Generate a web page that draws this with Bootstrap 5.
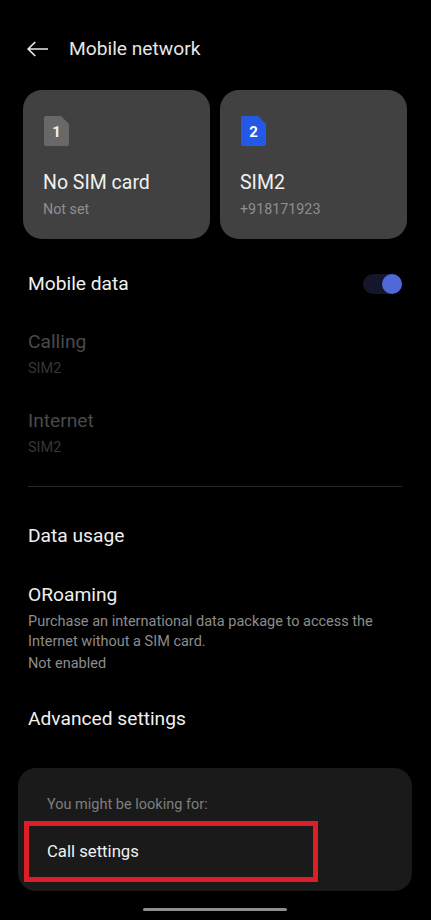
<!DOCTYPE html>
<html lang="en">
<head>
<meta charset="utf-8">
<title>Mobile network</title>
<link rel="stylesheet" href="https://cdn.jsdelivr.net/npm/bootstrap@5.3.0/dist/css/bootstrap.min.css">
<style>
html,body{height:100%;background:#000;}
body{font-family:Roboto,"Noto Sans",sans-serif;color:#f2f2f2;overflow:hidden;}
.screen{width:431px;height:920px;padding-top:37px;}
.topbar{height:24px;padding-left:27px;gap:21px;}
.topbar svg{display:block;}
.title-txt{font-size:19.2px;line-height:24px;color:#e6e6e6;}
.sim-row{padding:0 24px 0 23px;margin-top:29px;gap:10px;}
.sim-tile{flex:1 1 0;height:149px;background:#414141;border-radius:19px;padding:26px 0 0 20px;}
.sim-tile svg{display:block;margin-left:1px;}
.sim-name{font-size:19.5px;line-height:24px;margin-top:25px;color:#f0f0f0;}
.sim-sub{font-size:14.3px;line-height:18px;margin-top:5px;color:#8f8f8f;}
.item{padding-left:28px;padding-right:29px;}
.item-title{font-size:19.2px;line-height:24px;color:#f0f0f0;}
.item-sub{font-size:14.5px;line-height:20px;color:#8c8c8c;}
.muted-title{color:#4a4a4a;}
.muted-sub{color:#363636;font-size:14.5px;line-height:18px;margin-top:6px;}
.toggle-track{width:39px;height:20px;border-radius:10px;background:#15162a;}
.toggle-knob{width:20px;height:20px;border-radius:50%;background:#5069d8;}
.rule{height:1px;background:#262626;margin:29px 29px 0 28px;}
.panel{margin:37px 19px 0 18px;height:123px;background:#1a1a1a;border-radius:18px;padding-top:28px;}
.panel-head{font-size:14.5px;line-height:18px;color:#7f7f7f;padding-left:29px;}
.hilite{width:294px;height:61px;margin:7px 0 0 6px;border:5px solid #dc1f26;padding-left:18px;font-size:16.7px;color:#f0f0f0;}
.home-bar{width:144px;height:3px;border-radius:2px;background:#8e8e8e;margin:17px 0 0 143px;}
.step-data{margin-top:33px;}
.step-calling{margin-top:34px;}
.step-internet{margin-top:31px;}
.step-usage{margin-top:37px;}
.step-roam{margin-top:35px;}
.step-desc{margin-top:5px;}
.step-status{margin-top:2px;}
.step-adv{margin-top:33px;}
</style>
</head>
<body>
<div class="screen">
  <div class="topbar d-flex align-items-center">
    <svg width="21" height="16" viewBox="0 0 21 16" fill="none" stroke="#e8e8e8" stroke-width="1.7"><path d="M21 8H1.5M8.2 1 1.2 8l7 7"/></svg>
    <div class="title-txt">Mobile network</div>
  </div>

  <div class="sim-row d-flex">
    <div class="sim-tile">
      <svg width="25" height="30" viewBox="0 0 25 30"><path d="M2 0h15l8 8v20a2 2 0 0 1-2 2H2a2 2 0 0 1-2-2V2a2 2 0 0 1 2-2z" fill="#686868"/><text x="12.5" y="20.5" text-anchor="middle" font-family="Roboto,sans-serif" font-size="15" font-weight="700" fill="#f0f0f0">1</text></svg>
      <div class="sim-name">No SIM card</div>
      <div class="sim-sub">Not set</div>
    </div>
    <div class="sim-tile">
      <svg width="25" height="30" viewBox="0 0 25 30"><path d="M2 0h15l8 8v20a2 2 0 0 1-2 2H2a2 2 0 0 1-2-2V2a2 2 0 0 1 2-2z" fill="#2359e6"/><text x="12.5" y="20.5" text-anchor="middle" font-family="Roboto,sans-serif" font-size="15" font-weight="700" fill="#fff">2</text></svg>
      <div class="sim-name">SIM2</div>
      <div class="sim-sub">+918171923</div>
    </div>
  </div>

  <div class="item d-flex align-items-center justify-content-between step-data">
    <div class="item-title">Mobile data</div>
    <div class="toggle-track d-flex justify-content-end"><div class="toggle-knob"></div></div>
  </div>

  <div class="item step-calling">
    <div class="item-title muted-title">Calling</div>
    <div class="muted-sub">SIM2</div>
  </div>
  <div class="item step-internet">
    <div class="item-title muted-title">Internet</div>
    <div class="muted-sub">SIM2</div>
  </div>
  <div class="rule"></div>

  <div class="item step-usage"><div class="item-title">Data usage</div></div>
  <div class="item step-roam">
    <div class="item-title">ORoaming</div>
    <div class="item-sub step-desc">Purchase an international data package to access the<br>Internet without a SIM card.</div>
    <div class="item-sub step-status">Not enabled</div>
  </div>
  <div class="item step-adv"><div class="item-title">Advanced settings</div></div>

  <div class="panel">
    <div class="panel-head">You might be looking for:</div>
    <div class="hilite d-flex align-items-center">Call settings</div>
  </div>
  <div class="home-bar"></div>
</div>
<script src="https://cdn.jsdelivr.net/npm/bootstrap@5.3.0/dist/js/bootstrap.bundle.min.js"></script>
</body>
</html>
